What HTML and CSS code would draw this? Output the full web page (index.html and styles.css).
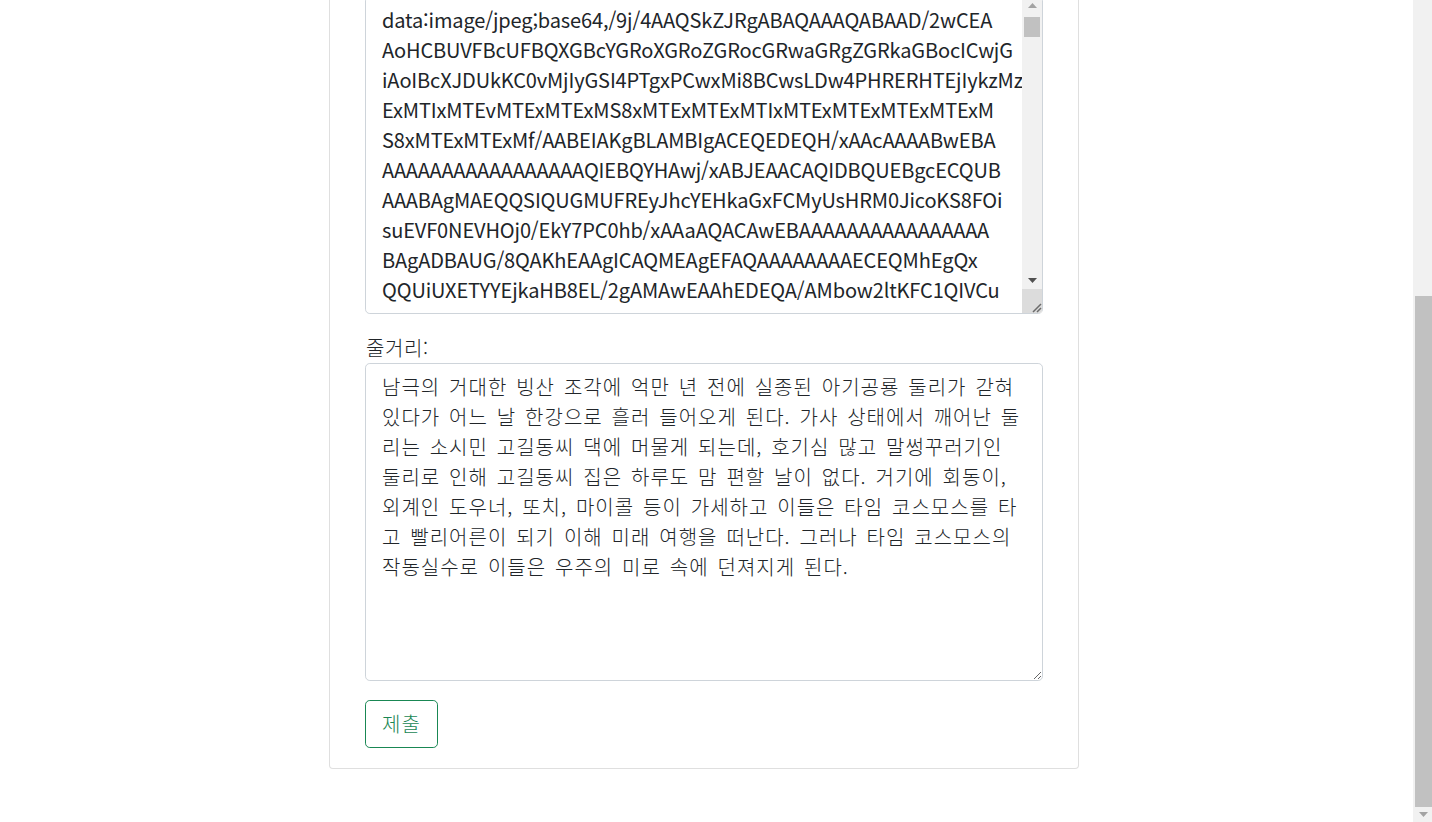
FILE: index.html
```html
<!DOCTYPE html>
<html lang="ko">
<head>
<meta charset="utf-8">
<title>영화 등록</title>
<link rel="stylesheet" href="styles.css">
</head>
<body>
<div class="page">
  <div class="card">
    <div class="card-body">
      <h2 class="card-title">영화 등록</h2>
      <form class="form" action="#">
        <div class="field">
          <label class="label" for="title">제목:</label>
          <input class="control" id="title" type="text" value="아기공룡 둘리 - 얼음별 대모험">
        </div>
        <div class="field">
          <label class="label" for="director">감독:</label>
          <input class="control" id="director" type="text" value="김수정">
        </div>
        <div class="field">
          <label class="label" for="poster">포스터:</label>
          <div class="scroll-wrap">
            <textarea class="control data" id="poster" rows="10" wrap="off">data:image/jpeg;base64,/9j/4AAQSkZJRgABAQAAAQABAAD/2wCEA
AoHCBUVFBcUFBQXGBcYGRoXGRoZGRocGRwaGRgZGRkaGBocICwjG
iAoIBcXJDUkKC0vMjIyGSI4PTgxPCwxMi8BCwsLDw4PHRERHTEjIykzMz
ExMTIxMTEvMTExMTExMS8xMTExMTExMTIxMTExMTExMTExMTExM
S8xMTExMTExMf/AABEIAKgBLAMBIgACEQEDEQH/xAAcAAAABwEBA
AAAAAAAAAAAAAAAAAQIEBQYHAwj/xABJEAACAQIDBQUEBgcECQUB
AAABAgMAEQQSIQUGMUFREyJhcYEHkaGxFCMyUsHRM0JicoKS8FOi
suEVF0NEVHOj0/EkY7PC0hb/xAAaAQACAwEBAAAAAAAAAAAAAAAA
BAgADBAUG/8QAKhEAAgICAQMEAgEFAQAAAAAAAAECEQMhEgQx
QQUiUXETYYEjkaHB8EL/2gAMAwEAAhEDEQA/AMbow2ltKFC1QIVCu</textarea>
            <div class="vscroll" aria-hidden="true">
              <div class="sb-btn">
                <svg width="9" height="5" viewBox="0 0 9 5"><polygon points="0,5 9,5 4.5,0" fill="#a3a3a3"/></svg>
              </div>
              <div class="sb-track"><div class="sb-thumb"></div></div>
              <div class="sb-btn">
                <svg width="9" height="5" viewBox="0 0 9 5"><polygon points="0,0 9,0 4.5,5" fill="#505050"/></svg>
              </div>
              <div class="sb-corner">
                <svg width="12" height="12" viewBox="0 0 12 12"><path d="M11 3 L3 11 M11 7 L7 11" stroke="#6b6b6b" stroke-width="1.5" fill="none"/></svg>
              </div>
            </div>
          </div>
        </div>
        <div class="field">
          <label class="label" for="plot">줄거리:</label>
          <textarea class="control plot" id="plot" rows="10">남극의 거대한 빙산 조각에 억만 년 전에 실종된 아기공룡 둘리가 갇혀
있다가 어느 날 한강으로 흘러 들어오게 된다. 가사 상태에서 깨어난 둘
리는 소시민 고길동씨 댁에 머물게 되는데, 호기심 많고 말썽꾸러기인
둘리로 인해 고길동씨 집은 하루도 맘 편할 날이 없다. 거기에 회동이,
외계인 도우너, 또치, 마이콜 등이 가세하고 이들은 타임 코스모스를 타
고 빨리어른이 되기 이해 미래 여행을 떠난다. 그러나 타임 코스모스의
작동실수로 이들은 우주의 미로 속에 던져지게 된다.</textarea>
        </div>
        <button class="btn" type="submit">제출</button>
      </form>
    </div>
  </div>
</div>
<div class="page-scroll" aria-hidden="true">
  <div class="ps-thumb"></div>
  <div class="ps-btn">
    <svg width="9" height="5" viewBox="0 0 9 5"><polygon points="0,0 9,0 4.5,5" fill="#a3a3a3"/></svg>
  </div>
</div>
<script src="script.js"></script>
</body>
</html>
```

FILE: styles.css
```css
html, body {
  margin: 0;
  padding: 0;
  background: #ffffff;
}

body {
  font-family: "Noto Sans CJK KR", "Noto Sans", sans-serif;
  color: #212529;
  font-size: 16px;
}

.page {
  display: flex;
  justify-content: center;
  padding: 48px 24px 53px 0;
}

.card {
  width: 750px;
  box-sizing: border-box;
  border: 1px solid rgba(0, 0, 0, 0.125);
  border-radius: 4px;
  background: #fff;
}

.card-body {
  padding: 20px 35px;
}

.card-title {
  margin: 0 0 19px;
  font-size: 28px;
  font-weight: 500;
  line-height: 1.2;
}

.form {
  display: flex;
  flex-direction: column;
  align-items: flex-start;
}

.field {
  display: flex;
  flex-direction: column;
  width: 100%;
  margin-bottom: 19px;
}

.label {
  font-size: 20px;
  line-height: 30px;
  margin-left: 1px;
  letter-spacing: 0.6px;
  font-weight: 300;
}

.control {
  display: block;
  box-sizing: border-box;
  width: 100%;
  margin: 0;
  padding: 8px 16px;
  font-family: "Noto Sans CJK KR", "Noto Sans", sans-serif;
  font-size: 20px;
  line-height: 30px;
  color: #212529;
  background: #fff;
  border: 1px solid #ced4da;
  border-radius: 4.8px;
  outline: none;
}

textarea.control {
  height: 318px;
  resize: both;
}

.data {
  letter-spacing: -0.14px;
  white-space: pre;
  overflow: hidden;
}

.plot {
  letter-spacing: 1px;
  word-spacing: 2.3px;
  font-weight: 300;
}

/* fake textarea scrollbar */
.scroll-wrap {
  position: relative;
  width: 100%;
}

.vscroll {
  position: absolute;
  top: 1px;
  right: 1px;
  bottom: 1px;
  width: 20px;
  display: flex;
  flex-direction: column;
  background: #f1f1f1;
}

.sb-btn {
  height: 17px;
  display: flex;
  align-items: center;
  justify-content: center;
  flex: none;
}

.sb-track {
  flex: 1;
  padding-top: 3px;
}

.sb-thumb {
  width: 16px;
  height: 20px;
  margin-left: 2px;
  background: #c1c1c1;
}

.sb-corner {
  height: 24px;
  flex: none;
  background: #dcdcdc;
  display: flex;
  align-items: flex-end;
  justify-content: flex-end;
  border-bottom-right-radius: 3px;
}

/* fake page scrollbar */
.page-scroll {
  position: fixed;
  top: 0;
  right: 0;
  bottom: 0;
  width: 19px;
  background: #f1f1f1;
  display: flex;
  flex-direction: column;
  align-items: flex-end;
}

.ps-thumb {
  margin-top: 296px;
  width: 17px;
  height: 511px;
  background: #c1c1c1;
}

.ps-btn {
  width: 17px;
  height: 15px;
  display: flex;
  align-items: center;
  justify-content: center;
}

.btn {
  font-family: "Noto Sans CJK KR", "Noto Sans", sans-serif;
  font-size: 20px;
  line-height: 30px;
  padding: 8px 16px;
  letter-spacing: 1px;
  font-weight: 300;
  color: #198754;
  background: transparent;
  border: 1px solid #198754;
  border-radius: 4.8px;
  cursor: pointer;
}
```

FILE: script.js
```js
(function () {
  var poster = document.getElementById('poster');
  var chars = 'ABCDEFGHIJKLMNOPQRSTUVWXYZabcdefghijklmnopqrstuvwxyz0123456789+/';
  var seed = 12345;
  function rnd() {
    seed = (seed * 1103515245 + 12345) % 2147483648;
    return seed;
  }
  var extra = '';
  for (var i = 0; i < 130; i++) {
    var line = '';
    for (var j = 0; j < 52; j++) {
      line += chars.charAt(rnd() % 64);
    }
    extra += '\n' + line;
  }
  poster.value = poster.value + extra + '==';
  poster.scrollTop = 0;
  poster.scrollLeft = 0;

  function toBottom() {
    window.scrollTo(0, document.documentElement.scrollHeight);
  }
  toBottom();
  window.addEventListener('load', toBottom);
})();
```
